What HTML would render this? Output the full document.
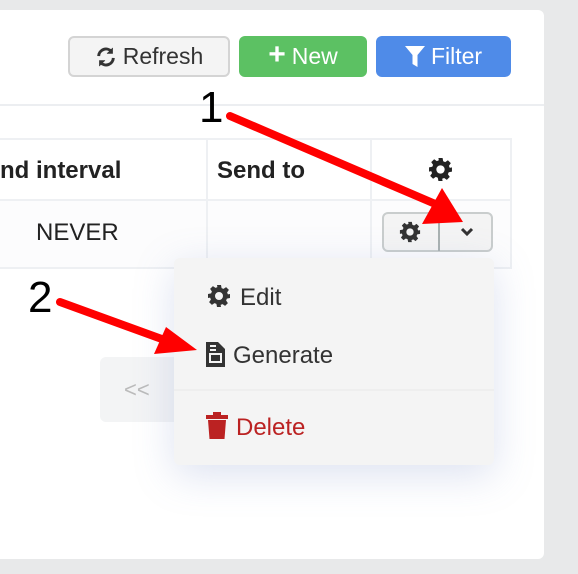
<!DOCTYPE html>
<html><head><style>
body{margin:0;width:578px;height:574px;background:#e8e9ea;font-family:"Liberation Sans",sans-serif;position:relative;overflow:hidden}
.card{position:absolute;left:0;top:10px;width:544px;height:549px;background:#fff;border-radius:0 6px 6px 0}
.btn{position:absolute;top:36px;height:41px;border-radius:6px;box-sizing:border-box;font-size:23px;display:flex;align-items:center;justify-content:center;gap:6px}
.abs{position:absolute}
.vl{position:absolute;width:2px;background:#eef0f3}
.hl{position:absolute;height:2px;background:#eef0f3}
.t{position:absolute;font-size:24px;color:#222}
</style></head><body>
<svg width="0" height="0" style="position:absolute"><defs>
<symbol id="gear" viewBox="0 0 24 24"><path fill="currentColor" fill-rule="evenodd" d="M10 1h4l.6 3.1 1.9.8 2.6-1.8 2.8 2.8-1.8 2.6.8 1.9L23 10v4l-3.1.6-.8 1.9 1.8 2.6-2.8 2.8-2.6-1.8-1.9.8L14 23h-4l-.6-3.1-1.9-.8-2.6 1.8-2.8-2.8 1.8-2.6-.8-1.9L1 14v-4l3.1-.6.8-1.9-1.8-2.6 2.8-2.8 2.6 1.8 1.9-.8zM12 8a4 4 0 1 0 0 8a4 4 0 1 0 0-8z"/></symbol>
</defs></svg>
<div class="card"></div>
<div class="btn" style="left:68px;width:162px;background:#f4f4f4;border:2px solid #d4d4d4;color:#333">
<svg width="22" height="22" viewBox="0 0 24 24" fill="none" stroke="#333" stroke-width="3.2"><path d="M4 11a8 8 0 0 1 14-5"/><path d="M20 13a8 8 0 0 1-14 5"/><path d="M19 2v6h-6M5 22v-6h6" fill="#333" stroke-width="1"/></svg>Refresh</div>
<div class="btn" style="left:239px;width:128px;background:#5cc163;color:#fff"><span style="font-size:30px;font-weight:bold;margin-top:-3px">+</span>New</div>
<div class="btn" style="left:376px;width:135px;background:#4f8be8;color:#fff">
<svg width="20" height="22" viewBox="0 0 20 22"><path d="M0 0h20l-7.5 9v12l-5-3V9z" fill="#fff"/></svg>Filter</div>
<div class="hl" style="left:0;top:104px;width:544px;background:#eceef1"></div>
<div class="hl" style="left:0;top:138px;width:511px"></div>
<div class="hl" style="left:0;top:199px;width:511px"></div>
<div class="hl" style="left:0;top:267px;width:511px"></div>
<div class="abs" style="left:0;top:201px;width:511px;height:66px;background:#fcfcfd"></div>
<div class="vl" style="left:206px;top:138px;height:131px"></div>
<div class="vl" style="left:370px;top:138px;height:131px"></div>
<div class="vl" style="left:510px;top:138px;height:131px"></div>
<div class="t" style="left:0;top:157px;font-weight:bold">nd interval</div>
<div class="t" style="left:217px;top:157px;font-weight:bold">Send to</div>
<svg class="abs" style="left:428px;top:157px;color:#222" width="25" height="25"><use href="#gear"/></svg>
<div class="t" style="left:36px;top:219px">NEVER</div>
<div class="abs" style="left:382px;top:212px;width:111px;height:40px;border:2px solid #c9cdcd;border-radius:6px;box-sizing:border-box;background:#f4f4f4"></div>
<div class="vl" style="left:438px;top:213px;height:38px;background:#a9b1b1"></div>
<svg class="abs" style="left:399px;top:221px;color:#333" width="22" height="22"><use href="#gear"/></svg>
<svg class="abs" style="left:460px;top:227px" width="14" height="10"><path d="M2 2l5 5 5-5" stroke="#333" stroke-width="3" fill="none"/></svg>
<div class="abs" style="left:100px;top:357px;width:80px;height:65px;background:#f3f4f5;border-radius:6px;color:#bbb;font-size:22px;line-height:65px;padding-left:24px;box-sizing:border-box">&lt;&lt;</div>
<div class="abs" style="left:174px;top:258px;width:320px;height:207px;background:#f4f4f4;border-radius:6px;box-shadow:0 10px 40px rgba(120,140,200,.25)"></div>
<div class="hl" style="left:174px;top:389px;width:320px;background:#eeeeee"></div>
<svg class="abs" style="left:207px;top:284px;color:#333" width="24" height="24"><use href="#gear"/></svg>
<div class="t" style="left:240px;top:284px;color:#333">Edit</div>
<svg class="abs" style="left:206px;top:341px" width="19" height="27" viewBox="0 0 19 27"><path d="M0 1h12l7 7v18H0z" fill="#333"/><path d="M4 5h6M4 9h6M4 13h11v8H4z" stroke="#f4f4f4" stroke-width="2" fill="none"/></svg>
<div class="t" style="left:233px;top:342px;color:#333">Generate</div>
<svg class="abs" style="left:206px;top:412px" width="22" height="28" viewBox="0 0 22 28"><path d="M0 3h22v4H0zM7 0h8v3H7zM2 8h18l-1.5 19h-15z" fill="#bb2222"/></svg>
<div class="t" style="left:236px;top:414px;color:#bb2222">Delete</div>
<div class="abs" style="left:199px;top:83px;font-size:44px;color:#000">1</div>
<div class="abs" style="left:28px;top:273px;font-size:44px;color:#000">2</div>
<svg class="abs" style="left:0;top:0" width="578" height="574">
<line x1="230" y1="116" x2="440" y2="206" stroke="#f00" stroke-width="8" stroke-linecap="round"/>
<polygon points="463,222 422,224 442,188" fill="#f00"/>
<line x1="60" y1="302" x2="170" y2="342" stroke="#f00" stroke-width="8" stroke-linecap="round"/>
<polygon points="197,350 154,354 166,327" fill="#f00"/>
</svg>
</body></html>
